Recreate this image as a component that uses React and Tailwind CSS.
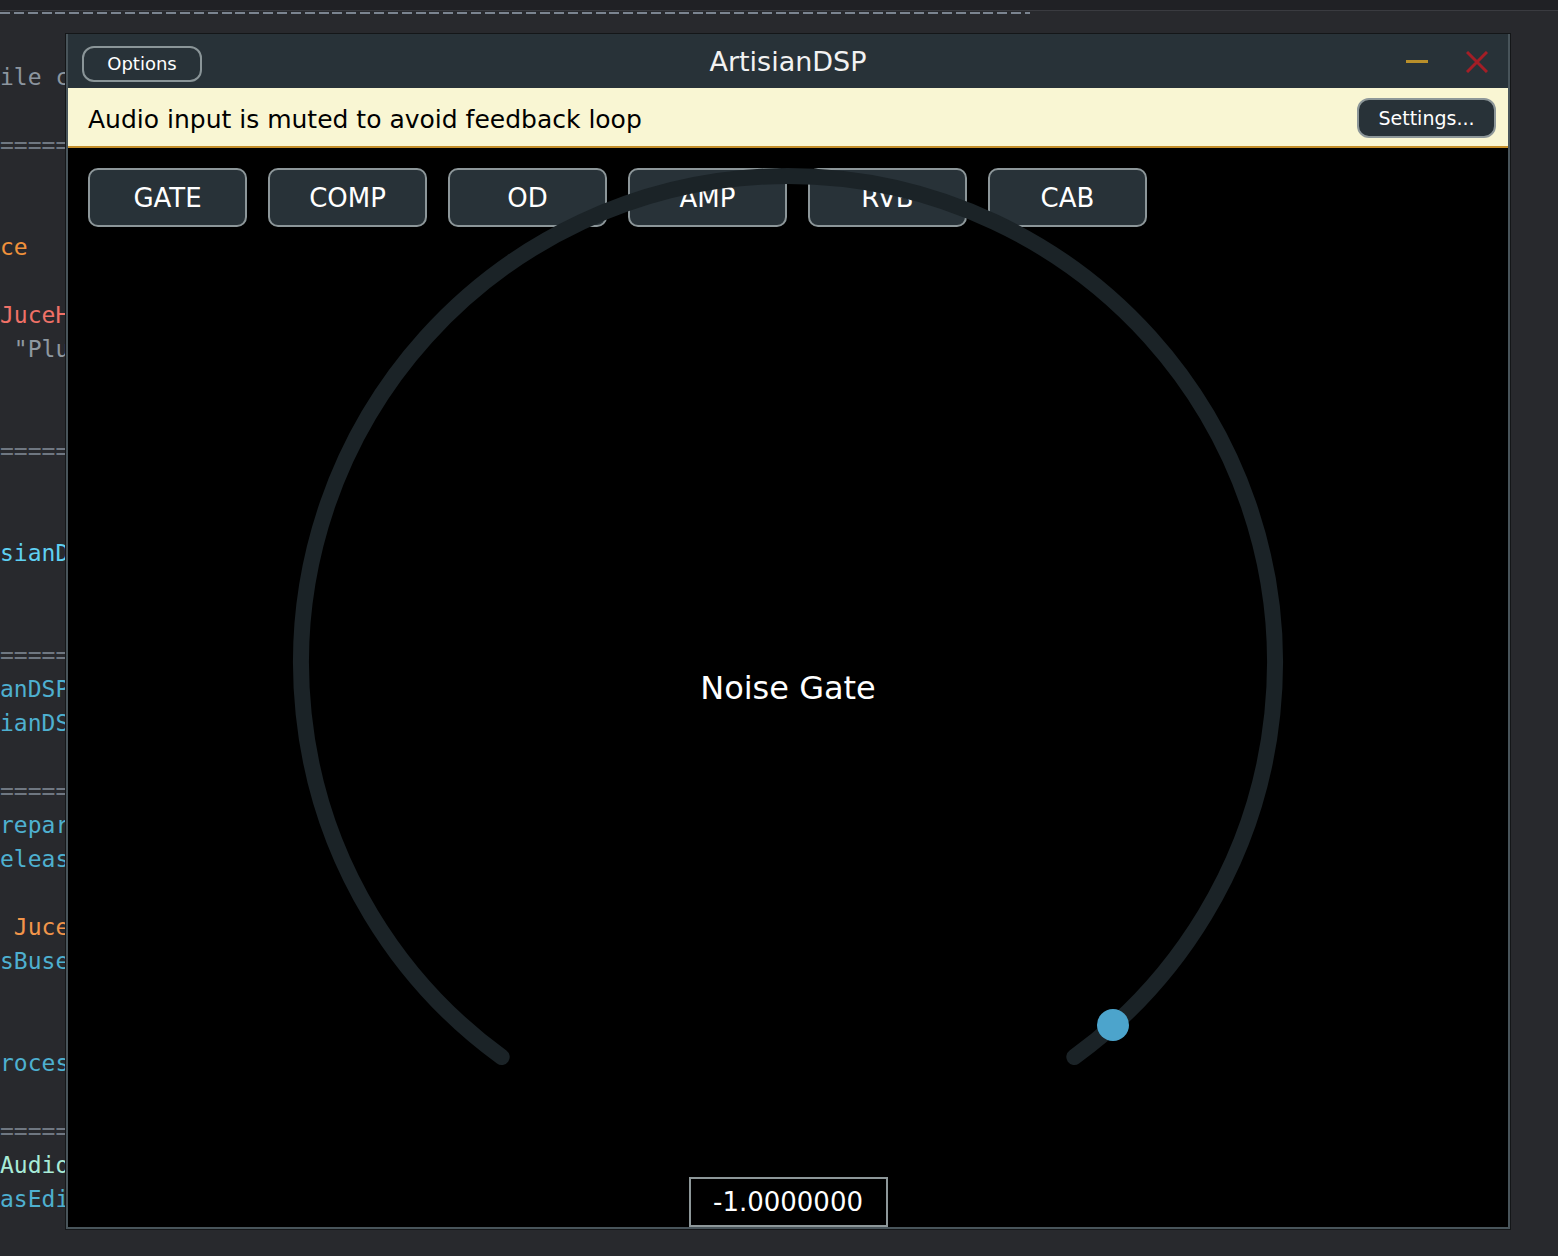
import React from 'react';

const codeLines = {
  2: { text: 'ile c', color: 'text-[#8c959f]' },
  4: { text: '======', color: 'text-[#6f7781]' },
  7: { text: 'ce', color: 'text-[#f0913b]' },
  9: { text: 'JuceH', color: 'text-[#f07167]' },
  10: { text: ' "Plu', color: 'text-[#8f98a0]' },
  13: { text: '======', color: 'text-[#6f7781]' },
  16: { text: 'sianD', color: 'text-[#5fd0f2]' },
  19: { text: '======', color: 'text-[#6f7781]' },
  20: { text: 'anDSP', color: 'text-[#4eb0d0]' },
  21: { text: 'ianDS', color: 'text-[#4eb0d0]' },
  23: { text: '======', color: 'text-[#6f7781]' },
  24: { text: 'repar', color: 'text-[#4eb0d0]' },
  25: { text: 'eleas', color: 'text-[#4eb0d0]' },
  27: { text: ' Juce', color: 'text-[#f2954a]' },
  28: { text: 'sBuse', color: 'text-[#4eb0d0]' },
  31: { text: 'roces', color: 'text-[#4eb0d0]' },
  33: { text: '======', color: 'text-[#6f7781]' },
  34: { text: 'Audio', color: 'text-[#a8ecd8]' },
  35: { text: 'asEdi', color: 'text-[#4eb0d0]' },
};

const tabs = ['GATE', 'COMP', 'OD', 'AMP', 'RVB', 'CAB'];

const ui = { fontFamily: '"DejaVu Sans", Verdana, sans-serif' };

const App = () => {
  const lines = [];
  for (let i = 1; i <= 36; i++) lines.push(codeLines[i] || { text: '\u00a0', color: '' });

  return (
    <div className="relative w-[1558px] h-[1256px] bg-[#28292d] overflow-hidden">
      {/* editor behind the plugin window */}
      <div className="h-[11px] bg-[#202125] border-b border-[#3a3b40]" />
      <div className="mt-[1px] h-[2px] w-[1030px] bg-[repeating-linear-gradient(90deg,#7b8490_0_10px,transparent_10px_13.85px)]" />
      <div className="mt-[12px] w-[66px] overflow-hidden whitespace-pre text-[23px] leading-[34px]" style={{ fontFamily: '"DejaVu Sans Mono", "Liberation Mono", monospace' }}>
        {lines.map((l, i) => <div key={i} className={l.color}>{l.text}</div>)}
      </div>

      {/* plugin window */}
      <div className="absolute left-[65px] top-[33px] w-[1446px] h-[1197px] border border-[#141618] flex flex-col" style={ui}>
        <div className="flex-1 flex flex-col border-x-2 border-b-2 border-[#48545a]">
          <div className="relative h-[54px] bg-[#283238] flex items-center px-[14px] pt-[5px]">
            <button className="w-[120px] h-[36px] rounded-[12px] border-2 border-[#8a9598] text-white text-[18px] leading-none">Options</button>
            <div className="absolute inset-0 pt-[3px] flex items-center justify-center pointer-events-none">
              <span className="text-[27px] text-[#f2f2f2]">ArtisianDSP</span>
            </div>
            <div className="ml-auto flex items-center gap-[38px] pr-[6px] pb-[4px]">
              <div className="w-[22px] h-[3px] bg-[#b98f2a]" />
              <svg width="22" height="22" viewBox="0 0 22 22">
                <path d="M1 1 L21 21 M21 1 L1 21" stroke="#a41e26" strokeWidth="3" />
              </svg>
            </div>
          </div>

          <div className="h-[60px] bg-[#f9f6d3] border-b-2 border-[#c48e2a] flex items-center pl-[20px] pr-[12px] pt-[2px]">
            <span className="pt-[3px] text-[25px] text-black">Audio input is muted to avoid feedback loop</span>
            <button className="ml-auto w-[139px] h-[40px] rounded-[12px] bg-[#283238] border-2 border-[#8d9799] text-white text-[19px] leading-none">Settings...</button>
          </div>

          <div className="relative flex-1 bg-black flex flex-col">
            <div className="flex gap-[21px] pl-[20px] pt-[20px]">
              {tabs.map(t => (
                <button key={t} className="w-[159px] h-[59px] rounded-[10px] bg-[#283238] border-2 border-[#8c9699] text-white text-[26px] leading-none">{t}</button>
              ))}
            </div>

            <div className="absolute inset-0 flex items-center justify-center">
              <svg className="absolute left-0 top-0" width="1440" height="1079" viewBox="0 0 1440 1079">
                <path d="M 433.7 909 A 487 487 0 1 1 1006.3 909" fill="none" stroke="#1b2327" strokeWidth="16" strokeLinecap="round" />
                <circle cx="1045" cy="877" r="16" fill="#4ca4cc" />
              </svg>
              <span className="relative text-[32px] text-white">Noise Gate</span>
            </div>

            <div className="relative mt-auto self-center w-[199px] h-[50px] border-2 border-[#8d9799] bg-black flex items-center justify-center text-white text-[26px]">
              -1.0000000
            </div>
          </div>
        </div>
      </div>
    </div>
  );
};

export default App;
